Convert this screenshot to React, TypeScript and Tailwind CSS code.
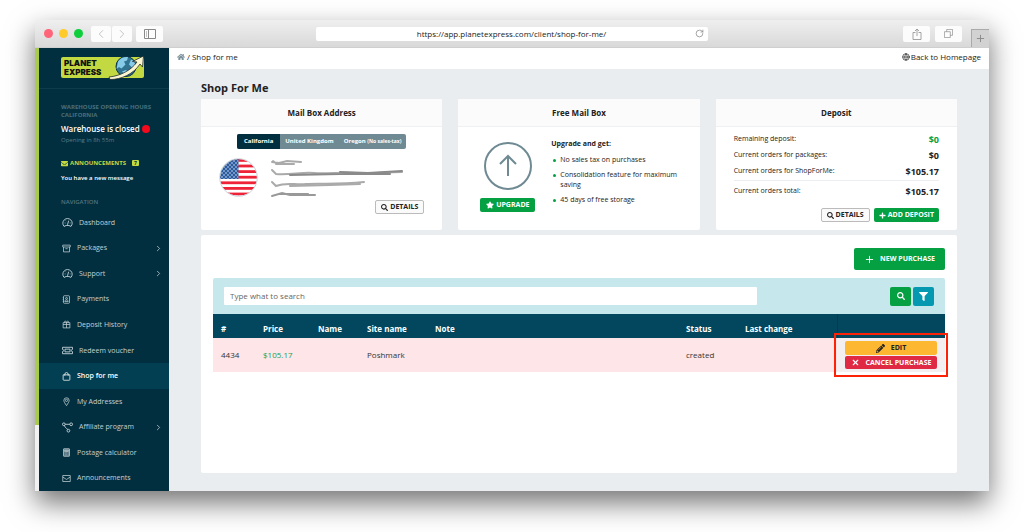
import { useState } from "react";
import type { ReactNode } from "react";
import { FaEnvelope, FaFilter, FaHome, FaPencilAlt, FaPlus, FaSearch, FaStar } from "react-icons/fa";
import { ChevronLeft, ChevronRight, Globe, Plus, RotateCw, X } from "lucide-react";

// sidebar icon drawings, 24x24 grid
const icons: Record<string, ReactNode> = {
  gauge: (
    <>
      <path d="M4.500 20.500A10.200 10.200 0 1 1 19.500 20.500L15 18.500H9Z" />
      <path d="M12 17L14.500 8M6 13h1.500M17 13h1.500M8 7.500l1 1" />
    </>
  ),
  box: (
    <>
      <path d="M2 3h20v5H2zM4 8v13h16V8M9 12.500h6" />
    </>
  ),
  contact: (
    <>
      <rect x="4" y="2" width="16" height="20" rx="2" />
      <circle cx="12" cy="9" r="2.500" />
      <path d="M7.500 17.500c0-6 9-6 9 0zM2 7h2M2 12h2M2 17h2" />
    </>
  ),
  gift: (
    <>
      <path d="M3 7h18v14H3zM3 12h18M12 7v14M7 7c-2-5 4-6 5 0 1-6 7-5 5 0" />
    </>
  ),
  voucher: (
    <>
      <path d="M1 5h22v4.500a2.500 2.500 0 0 0 0 5V19H1v-4.500a2.500 2.500 0 0 0 0-5z" />
      <path d="M6.500 9h11v6h-11z" />
    </>
  ),
  bag: (
    <>
      <path d="M3 7.500h18V20a2 2 0 0 1-2 2H5a2 2 0 0 1-2-2zM7.500 10V6a4.500 4.500 0 0 1 9 0v4" />
    </>
  ),
  pin: (
    <>
      <path d="M12 23C8 17 5 13 5 9a7 7 0 0 1 14 0c0 4-3 8-7 14z" />
      <circle cx="12" cy="9" r="3" />
    </>
  ),
  share: (
    <>
      <circle cx="4" cy="5" r="3" />
      <circle cx="20" cy="5" r="3" />
      <circle cx="14" cy="19" r="3" />
      <path d="M7 5h10M5.500 8c1 4 3 5 7 8" />
    </>
  ),
  calculator: (
    <>
      <rect x="4" y="2" width="16" height="20" rx="1" fill="currentColor" fillOpacity="0.45" />
      <path d="M7 6h10v3H7zM8 13h1M12 13h1M16 13h1M8 18h1M12 18h1M16 18h1" />
    </>
  ),
  mail: (
    <>
      <path d="M2 4h20v16H2zM2 8l10 6.500L22 8" />
    </>
  ),
};

const navItems = [
  { label: "Dashboard", icon: "gauge", wide: true },
  { label: "Packages", icon: "box", more: true },
  { label: "Support", icon: "gauge", wide: true, more: true },
  { label: "Payments", icon: "contact" },
  { label: "Deposit History", icon: "gift" },
  { label: "Redeem voucher", icon: "voucher", wide: true },
  { label: "Shop for me", icon: "bag", active: true },
  { label: "My Addresses", icon: "pin" },
  { label: "Affiliate program", icon: "share", wide: true, more: true },
  { label: "Postage calculator", icon: "calculator" },
  { label: "Announcements", icon: "mail" },
];

const locations = [
  { name: "California" },
  { name: "United Kingdom" },
  { name: "Oregon", note: "(No sales-tax)" },
];

const deposits = [
  { label: "Remaining deposit:", value: "$0", green: true },
  { label: "Current orders for packages:", value: "$0" },
  { label: "Current orders for ShopForMe:", value: "$105.17" },
];

const benefits = [
  "No sales tax on purchases",
  "Consolidation feature for maximum saving",
  "45 days of free storage",
];

function Logo() {
  return (
    <a
      href="#home"
      className="relative block h-[21px] w-[83px] rounded-xs bg-[#c3d941] pt-px pl-[3px] font-[Inter,sans-serif] text-[8px] font-black text-[#111]"
    >
      <span className="block leading-[10px]">PLANET</span>
      <span className="block leading-[9px]">EXPRESS</span>
      <svg viewBox="0 0 72 48" className="absolute -top-[2px] right-0 h-[25px] w-[36px]">
        <circle cx="36" cy="22" r="20" fill="#2f7391" stroke="#0d3146" strokeWidth="2" />
        <path d="M20 12c5-8 13-10 20-9l-2 7-6 2 3 6-8 8-5-3-5 4zM46 8c6 2 9 8 9 14l-7 2-6-6zM28 32l8-3 6 6-5 6z" fill="#86cbe8" />
        <path d="M2 43C24 41 46 30 58 13l-9-1 22-11-2 22-5-6C51 37 27 48 4 48z" fill="#fbf5d0" stroke="#16242b" strokeWidth="1.500" strokeLinejoin="round" />
      </svg>
    </a>
  );
}

function Flag() {
  return (
    <svg viewBox="0 0 39 39" className="size-[39px]" role="img" aria-label="United States">
      <defs>
        <clipPath id="round">
          <circle cx="19.5" cy="19.5" r="18.500" />
        </clipPath>
        <pattern id="stars" width="4" height="4" patternUnits="userSpaceOnUse">
          <circle cx="1" cy="1" r="0.700" fill="#fff" />
          <circle cx="3" cy="3" r="0.700" fill="#fff" />
        </pattern>
      </defs>
      <g clipPath="url(#round)">
        <rect width="39" height="39" fill="#fff" />
        {[1, 6.6, 12.2, 17.8, 23.4, 29, 34.6].map((y) => (
          <rect key={y} y={y} width="39" height="2.800" fill="#ee2338" />
        ))}
        <rect width="19.500" height="21" fill="#2a5ba0" />
        <rect width="19.500" height="21" fill="url(#stars)" />
      </g>
      <circle cx="19.500" cy="19.500" r="18.800" fill="none" stroke="#c9d5da" />
    </svg>
  );
}

// hidden address lines
function Scribbles() {
  return (
    <svg viewBox="0 0 138 42" className="h-[42px] w-[138px]" fill="none" strokeLinecap="round">
      <defs>
        <filter id="soft" x="-5%" y="-50%" width="110%" height="200%">
          <feGaussianBlur stdDeviation="0.600" />
        </filter>
      </defs>
      <g filter="url(#soft)" stroke="#aaa" strokeWidth="2">
        <path d="M2 4l7 1 8-2 14 1M6 6h18M3 3l4 3" />
        <path d="M2 12l4 4c14 1 26-2 38-1s28-1 42 0 28-1 46-1" />
        <path d="M70 14l28 1 34-2M20 17l50-1 50 0" stroke="#8a8a8a" />
        <path d="M2 24l4 4c10-4 18-1 30-2s30 1 58-2" />
        <path d="M20 28l40-1 30-1" stroke="#aaa" />
        <path d="M2 38l10-3 8 2 25 0M10 36h28" stroke="#999" />
      </g>
    </svg>
  );
}

function Card({ title, children }: { title: string; children: ReactNode }) {
  return (
    <section className="flex h-[131px] flex-col rounded-xs bg-white">
      <h2 className="border-b border-[#eef0f1] bg-[#fbfbfb] text-center text-[8px] leading-[27px] font-bold">{title}</h2>
      {children}
    </section>
  );
}

function DetailsButton() {
  return (
    <button type="button" className="flex h-[14px] items-center gap-[2px] rounded-xs border border-[#bbb] bg-[#fafafa] px-[5px] text-[7px] leading-3 font-bold text-[#222]">
      <FaSearch className="size-[7px]" />
      DETAILS
    </button>
  );
}

function BrowserBar() {
  return (
    <div className="grid h-7 grid-cols-[1fr_41%_1fr] items-center border-b border-[#cfcfcf] bg-linear-to-b from-[#efefef] to-[#d9d9d9] text-[#999]">
      <div className="flex items-center pl-[9px]">
        <div className="flex gap-[6px]">
          <span className="size-[9px] rounded-full bg-[#ff6478]" />
          <span className="size-[9px] rounded-full bg-[#ffcb2b]" />
          <span className="size-[9px] rounded-full bg-[#0fce3c]" />
        </div>
        <div className="ml-2 flex gap-px">
          <button type="button" aria-label="Back" className="flex h-4 w-5 items-center justify-center rounded-xs bg-[#fcfcfc]">
            <ChevronLeft className="size-[14px] text-[#bbb]" strokeWidth={1.5} />
          </button>
          <button type="button" aria-label="Forward" className="flex h-4 w-5 items-center justify-center rounded-xs bg-[#fcfcfc]">
            <ChevronRight className="size-[14px] text-[#bbb]" strokeWidth={1.5} />
          </button>
        </div>
        <button type="button" aria-label="Show sidebar" className="ml-1 flex h-4 w-[27px] items-center justify-center rounded-xs bg-[#fcfcfc]">
          <svg viewBox="0 0 24 20" className="h-[10px] w-3" fill="none" stroke="#888" strokeWidth="2">
            <path d="M1 1h22v18H1zM9 1v18M4 6h2M4 10h2M4 14h2" />
          </svg>
        </button>
      </div>
      <div className="flex h-[14px] items-center rounded-xs bg-white pr-1 pl-3">
        <input
          aria-label="Address"
          readOnly
          value="https://app.planetexpress.com/client/shop-for-me/"
          className="min-w-0 flex-1 bg-transparent text-center text-[8px] leading-3 text-[#222] outline-none"
        />
        <button type="button" aria-label="Reload">
          <RotateCw className="size-[9px] text-[#888]" strokeWidth={2} />
        </button>
      </div>
      <div className="flex items-center justify-end gap-[5px] self-stretch">
        <button type="button" aria-label="Share" className="flex h-4 w-[27px] items-center justify-center rounded-xs bg-[#fcfcfc]">
          <svg viewBox="0 0 20 24" className="h-3 w-[10px]" fill="none" stroke="#888" strokeWidth="1.500">
            <path d="M7 9H2v14h16V9h-5M10 16V2M6 6l4-4 4 4" />
          </svg>
        </button>
        <button type="button" aria-label="Show tabs" className="flex h-4 w-[27px] items-center justify-center rounded-xs bg-[#fcfcfc]">
          <svg viewBox="0 0 20 20" className="size-[9px]" fill="none" stroke="#888" strokeWidth="1.500">
            <path d="M1 6h13v13H1zM6 6V1h13v13h-5" />
          </svg>
        </button>
        <button type="button" aria-label="New tab" className="ml-1 flex h-[18px] w-[18px] items-center justify-center self-end border-t border-l border-[#aaa] bg-[#d2d2d2]">
          <Plus className="size-[11px] text-[#888]" strokeWidth={2} />
        </button>
      </div>
    </div>
  );
}

function Sidebar() {
  return (
    <aside className="flex w-[130px] shrink-0 flex-col bg-[#022f3f] text-white">
      <div className="border-b border-[#0f3c4b] pt-[9px] pb-[10px] pl-[22px]">
        <Logo />
      </div>
      <div className="pt-[14px] pl-[22px]">
        <h2 className="text-[6px] leading-[8px] font-bold text-[#49707d]">
          WAREHOUSE OPENING HOURS
          <br />
          CALIFORNIA
        </h2>
        <p className="mt-1 flex items-center gap-[2px] text-[8px] leading-3 font-semibold">
          Warehouse is closed
          <span className="size-2 rounded-full bg-[#f5091d]" />
        </p>
        <p className="mt-px text-[6px] leading-[8px] text-[#5b7d88]">Opening in 8h 55m</p>
        <h2 className="mt-[14px] flex items-center gap-[2px] text-[6px] leading-[10px] font-bold text-[#c3d941]">
          <FaEnvelope className="size-[7px]" />
          ANNOUNCEMENTS
          <span className="ml-1 w-[7px] rounded-[1px] bg-[#c3d941] text-center text-[5px] leading-[6px] text-[#022f3f]">7</span>
        </h2>
        <p className="mt-[5px] text-[6px] leading-[10px] font-semibold">You have a new message</p>
        <h2 className="mt-[14px] mb-[3px] text-[6px] leading-[10px] font-semibold text-[#54757f]">NAVIGATION</h2>
      </div>
      <nav className="flex flex-1 flex-col">
        {navItems.map((item) => (
          <a
            key={item.label}
            href="#nav"
            className={
              item.active
                ? "flex flex-1 items-center gap-[6px] bg-[#023f52] pr-[6px] pl-[23px] text-[7px] leading-3 font-semibold text-white"
                : "flex flex-1 items-center gap-[6px] pr-[6px] pl-[23px] text-[7px] leading-3 font-medium text-[#c3d1d6]"
            }
          >
            <svg
              viewBox="0 0 24 24"
              className={item.wide ? "h-[11px] w-[11px]" : "h-[9px] w-[9px]"}
              fill="none"
              stroke="currentColor"
              strokeWidth="2"
            >
              {icons[item.icon]}
            </svg>
            {item.label}
            {item.more && <ChevronRight className="ml-auto size-[9px]" strokeWidth={2} />}
          </a>
        ))}
      </nav>
    </aside>
  );
}

function PurchaseTable() {
  return (
    <table className="w-full table-fixed text-left text-[8px] leading-3">
      <colgroup>
        <col className="w-[42px]" />
        <col className="w-[55px]" />
        <col className="w-[49px]" />
        <col className="w-[68px]" />
        <col />
        <col className="w-[59px]" />
        <col className="w-[100px]" />
        <col className="w-[108px]" />
      </colgroup>
      <thead>
        <tr className="h-6 bg-[#02475e] text-white">
          {["#", "Price", "Name", "Site name", "Note", "Status", "Last change"].map((name) => (
            <th key={name} className="px-2 pt-[6px] font-bold">
              {name}
            </th>
          ))}
          <th aria-label="Actions" className="border-l border-[#033a4e]" />
        </tr>
      </thead>
      <tbody>
        <tr className="h-[34px] bg-[#fde5e8] text-[#333]">
          <td className="px-2">4434</td>
          <td className="px-2 font-medium text-[#14a34c]">$105.17</td>
          <td />
          <td className="px-2">Poshmark</td>
          <td />
          <td className="px-2">created</td>
          <td />
          <td className="relative bg-[#f3eff1] px-2">
            <div className="flex flex-col gap-px">
              <button type="button" className="flex h-[14px] items-center justify-center gap-[6px] rounded-xs bg-[#fdb731] text-[7px] font-bold text-[#222]">
                <FaPencilAlt className="size-[9px]" />
                EDIT
              </button>
              <button type="button" className="flex h-[13px] items-center justify-center gap-[6px] rounded-xs bg-[#e02a44] text-[7px] font-bold text-white">
                <X className="size-[9px]" strokeWidth={3} />
                CANCEL PURCHASE
              </button>
            </div>
            {/* highlight around the row actions */}
            <div className="pointer-events-none absolute -inset-x-[3px] -inset-y-[5px] border-2 border-[#fb2208]" />
          </td>
        </tr>
      </tbody>
    </table>
  );
}

export default function App() {
  const [location, setLocation] = useState("California");
  const [search, setSearch] = useState("");

  return (
    <div className="flex min-h-screen bg-white px-[35px] pt-5 pb-[41px] font-['Open_Sans','Noto_Sans',sans-serif] text-[#222]">
      <div className="flex flex-1 flex-col shadow-[0_12px_26px_0_rgba(0,0,0,0.55)]">
        <BrowserBar />
        <div className="flex flex-1">
          <div className="w-1 shrink-0 bg-[#f1f1f1]">
            <div className="h-[85%] bg-[#a9cb4d]" />
          </div>
          <Sidebar />
          <main className="flex min-w-0 flex-1 flex-col bg-[#e9edf0]">
            <header className="flex h-[21px] items-center justify-between bg-white px-2 pb-[3px] text-[8px] leading-3">
              <nav className="flex items-center gap-[2px]">
                <a href="#home" aria-label="Home">
                  <FaHome className="size-[8px] text-[#7b929b]" />
                </a>
                <span>/</span>
                <span>Shop for me</span>
              </nav>
              <a href="#homepage" className="flex items-center gap-px">
                <Globe className="size-[8px]" strokeWidth={2} />
                Back to Homepage
              </a>
            </header>

            <div className="flex flex-1 flex-col px-8 pt-[11px] pb-[18px]">
              <h1 className="mb-[3px] text-[11px] leading-4 font-bold">Shop For Me</h1>

              <div className="grid grid-cols-3 gap-4">
                <Card title="Mail Box Address">
                  <div className="mt-[7px] flex justify-center">
                    <div className="flex h-[15px] overflow-hidden rounded-xs bg-[#6f8a93] text-[6px] font-bold text-white">
                      {locations.map((item) => (
                        <button
                          key={item.name}
                          type="button"
                          onClick={() => setLocation(item.name)}
                          className={item.name === location ? "bg-[#022f3f] px-[7px]" : "px-[5px]"}
                        >
                          {item.name} {item.note && <span className="text-[5px]">{item.note}</span>}
                        </button>
                      ))}
                    </div>
                  </div>
                  <div className="mt-[9px] flex gap-3 px-[18px]">
                    <Flag />
                    <Scribbles />
                  </div>
                  <div className="flex justify-end px-[18px]">
                    <DetailsButton />
                  </div>
                </Card>

                <Card title="Free Mail Box">
                  <div className="flex gap-4 px-[22px]">
                    <div className="flex w-[55px] shrink-0 flex-col items-center gap-2 pt-[15px]">
                      <svg viewBox="0 0 48 48" className="size-12" fill="none" stroke="#6f8a93" strokeWidth="2">
                        <circle cx="24" cy="24" r="23" />
                        <path d="M24 34V14M16 22l8-8 8 8" />
                      </svg>
                      <button type="button" className="flex h-[14px] items-center gap-[2px] rounded-xs bg-[#04a042] px-[6px] text-[7px] font-bold text-white">
                        <FaStar className="size-[8px]" />
                        UPGRADE
                      </button>
                    </div>
                    <div className="pt-3 text-[7px] leading-[10px]">
                      <h3 className="mb-[6px] font-bold">Upgrade and get:</h3>
                      <ul className="flex flex-col gap-[5px] pl-[2px]">
                        {benefits.map((text) => (
                          <li key={text} className="flex gap-1">
                            <span className="mt-1 size-[3px] shrink-0 rounded-full bg-[#04a042]" />
                            {text}
                          </li>
                        ))}
                      </ul>
                    </div>
                  </div>
                </Card>

                <Card title="Deposit">
                  <dl className="px-[18px] pt-1 text-[7px]">
                    {deposits.map((row) => (
                      <div key={row.label} className="flex justify-between">
                        <dt className="leading-[15px]">{row.label}</dt>
                        <dd className={row.green ? "pt-px text-[9px] leading-[15px] font-bold text-[#04a042]" : "pt-px text-[9px] leading-[15px] font-bold"}>
                          {row.value}
                        </dd>
                      </div>
                    ))}
                    <div className="mt-px flex justify-between border-t border-[#eceeef] pt-[2px]">
                      <dt className="leading-[15px]">Current orders total:</dt>
                      <dd className="pt-px text-[9px] leading-[15px] font-bold">$105.17</dd>
                    </div>
                  </dl>
                  <div className="mt-[9px] flex justify-end gap-1 px-[18px]">
                    <DetailsButton />
                    <button type="button" className="flex h-[14px] items-center gap-[2px] rounded-xs bg-[#04a042] px-[5px] text-[7px] font-bold text-white">
                      <FaPlus className="size-[7px]" />
                      ADD DEPOSIT
                    </button>
                  </div>
                </Card>
              </div>

              <section className="mt-[5px] flex-1 rounded-xs bg-white px-3 pt-[13px]">
                <div className="flex justify-end">
                  <button type="button" className="flex h-[22px] items-center gap-[5px] rounded-xs bg-[#04a042] px-[10px] text-[7px] font-bold text-white">
                    <Plus className="size-[11px]" strokeWidth={2} />
                    NEW PURCHASE
                  </button>
                </div>
                <div className="mt-2 flex h-9 items-center gap-[2px] rounded-t-xs bg-[#c6e8ec] px-[11px]">
                  <input
                    type="text"
                    aria-label="Search"
                    placeholder="Type what to search"
                    value={search}
                    onChange={(e) => setSearch(e.target.value)}
                    className="h-[18px] w-3/4 rounded-[1px] bg-white px-[6px] pb-px text-[8px] outline-none placeholder:text-[#666]"
                  />
                  <button type="button" aria-label="Search" className="ml-auto flex h-[19px] w-[21px] items-center justify-center rounded-xs bg-[#04a042] text-white">
                    <FaSearch className="size-[8px]" />
                  </button>
                  <button type="button" aria-label="Filter" className="flex h-[19px] w-[21px] items-center justify-center rounded-xs bg-[#0598b1] text-white">
                    <FaFilter className="size-[9px]" />
                  </button>
                </div>
                <PurchaseTable />
              </section>
            </div>
          </main>
        </div>
      </div>
    </div>
  );
}
